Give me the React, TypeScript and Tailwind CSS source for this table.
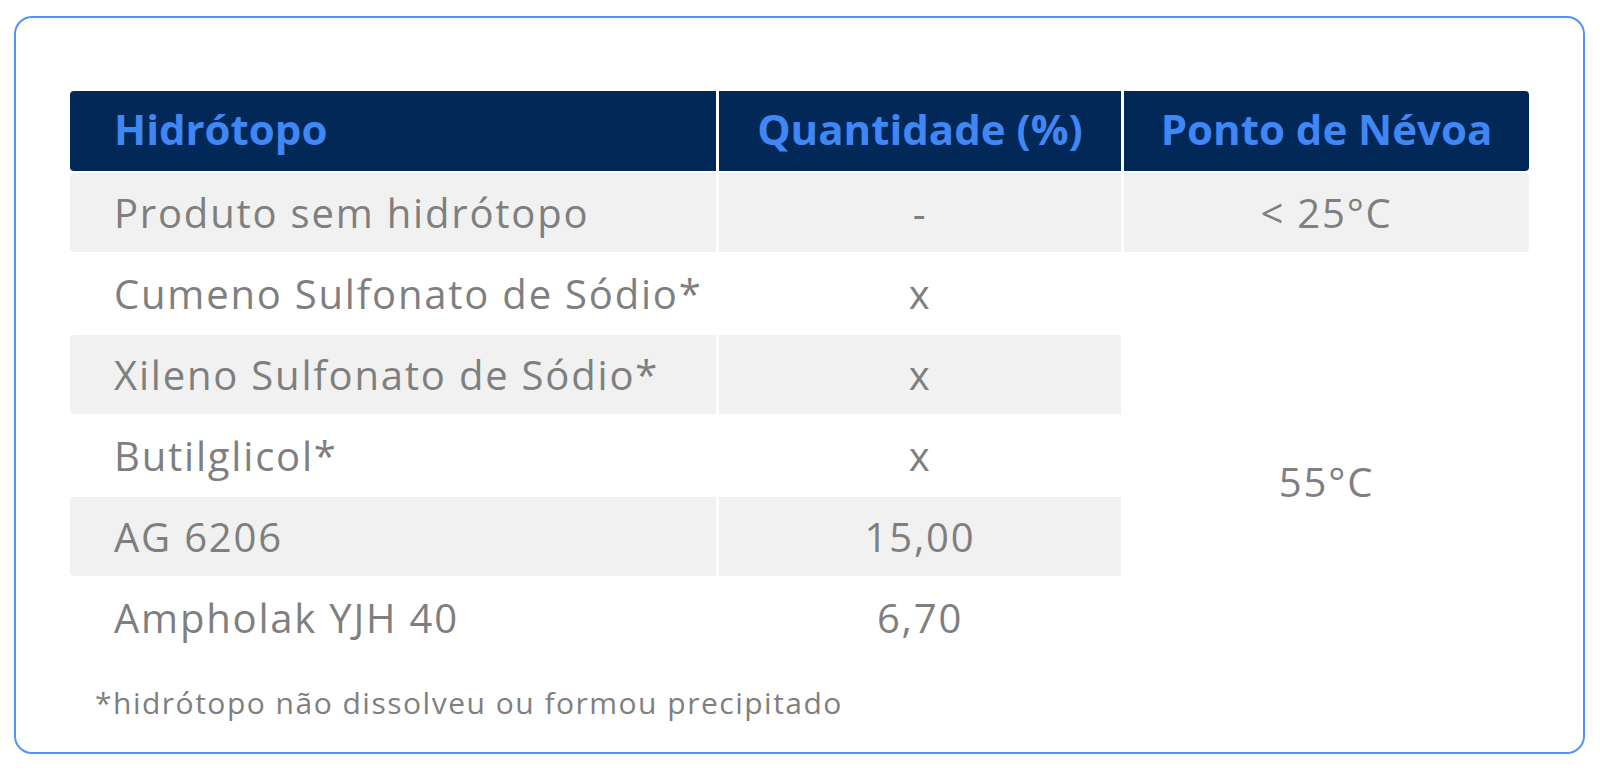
import React from 'react';

type Row = { name: string; qty: string; shaded: boolean };

const rows: Row[] = [
  { name: 'Cumeno Sulfonato de Sódio*', qty: 'x', shaded: false },
  { name: 'Xileno Sulfonato de Sódio*', qty: 'x', shaded: true },
  { name: 'Butilglicol*', qty: 'x', shaded: false },
  { name: 'AG 6206', qty: '15,00', shaded: true },
  { name: 'Ampholak YJH 40', qty: '6,70', shaded: false },
];

const font = { fontFamily: '"Open Sans", "Noto Sans", sans-serif' };

export default function App() {
  return (
    <div className="h-[772px] w-[1600px] bg-white pt-[16px] pl-[14px]" style={font}>
      <div className="h-[738px] w-[1571px] rounded-[18px] border-2 border-[#5592f6] px-[54px] pt-[73px]">
        {/* Table */}
        <div className="grid grid-cols-[646px_402px_405px] grid-rows-[80px_repeat(6,79px)] gap-x-[3px] gap-y-[2px] text-[40px] tracking-[1.8px] text-[#7f7f7f]">
          {/* Header */}
          <div className="flex items-center rounded-l-[4px] bg-[#012856] pb-[6px] pl-[44px] text-[42px] font-bold tracking-[0px] text-[#4086f4]">
            Hidrótopo
          </div>
          <div className="flex items-center justify-center bg-[#012856] pb-[6px] text-[42px] font-bold tracking-[0px] text-[#4086f4]">
            Quantidade (%)
          </div>
          <div className="flex items-center justify-center rounded-r-[4px] bg-[#012856] pb-[6px] text-[42px] font-bold tracking-[0px] text-[#4086f4]">
            Ponto de Névoa
          </div>

          {/* First row */}
          <div className="flex items-center rounded-l-[4px] bg-[#f1f1f1] pl-[44px]">Produto sem hidrótopo</div>
          <div className="flex items-center justify-center bg-[#f1f1f1]">-</div>
          <div className="flex items-center justify-center rounded-r-[4px] bg-[#f1f1f1]">&lt; 25°C</div>

          {rows.map((r, i) => (
            <React.Fragment key={r.name}>
              <div
                className={
                  'col-start-1 flex items-center pl-[44px] ' +
                  (r.shaded ? 'rounded-l-[4px] bg-[#f1f1f1]' : '')
                }
                style={{ gridRowStart: i + 3 }}
              >
                {r.name}
              </div>
              <div
                className={'col-start-2 flex items-center justify-center ' + (r.shaded ? 'bg-[#f1f1f1]' : '')}
                style={{ gridRowStart: i + 3 }}
              >
                {r.qty}
              </div>
            </React.Fragment>
          ))}

          {/* Merged cell */}
          <div className="col-start-3 row-start-3 row-span-5 flex items-center justify-center pt-[52px]">55°C</div>
        </div>

        {/* Footnote */}
        <p className="mt-[26px] pl-[25px] text-[30px] leading-[40px] tracking-[1.5px] text-[#7f7f7f]">
          *hidrótopo não dissolveu ou formou precipitado
        </p>
      </div>
    </div>
  );
}
